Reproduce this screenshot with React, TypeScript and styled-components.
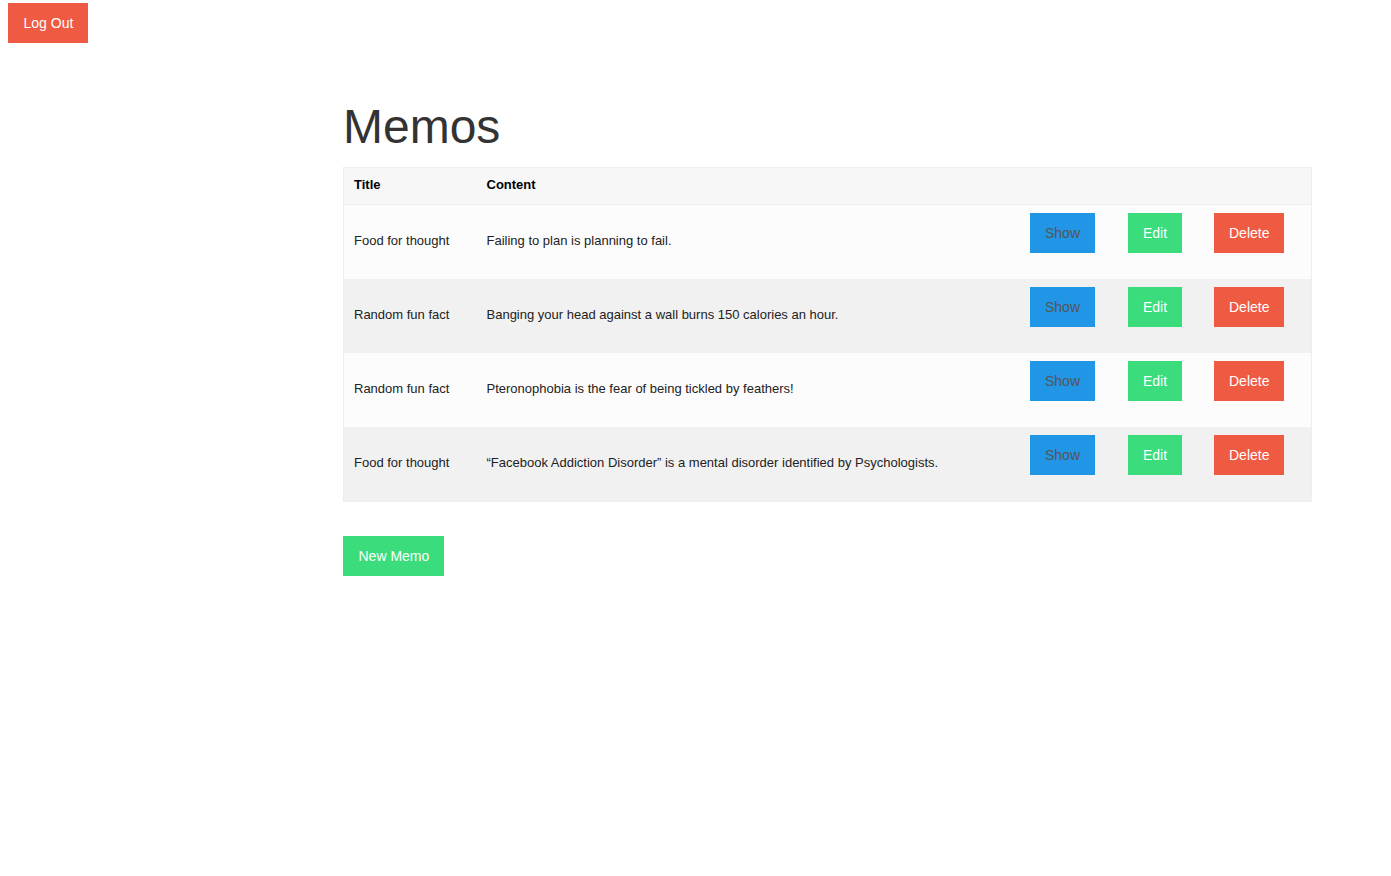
import React from 'react'
import styled, { createGlobalStyle } from 'styled-components'

const GlobalStyle = createGlobalStyle`
    body {
        margin: 0;
        background: #fff;
        font-family: "Liberation Sans", Arial, sans-serif;
        color: #333;
    }
`

const memos = [
    { title: 'Food for thought', content: 'Failing to plan is planning to fail.' },
    { title: 'Random fun fact', content: 'Banging your head against a wall burns 150 calories an hour.' },
    { title: 'Random fun fact', content: 'Pteronophobia is the fear of being tickled by feathers!' },
    { title: 'Food for thought', content: '\u201cFacebook Addiction Disorder\u201d is a mental disorder identified by Psychologists.' },
]

const colors = {
    red: '#ef5a42',
    green: '#3adc7b',
    blue: '#2196e6',
}

const App = () => {
    return (
        <>
            <GlobalStyle />
            <TopBar>
                <Button color="red">Log Out</Button>
            </TopBar>
            <Page>
                <Container>
                    <Heading>Memos</Heading>
                    <MemoTable>
                        <colgroup>
                            <col style={{ width: 133 }} />
                            <col style={{ width: 543 }} />
                            <col style={{ width: 98 }} />
                            <col style={{ width: 86 }} />
                            <col />
                        </colgroup>
                        <thead>
                            <tr>
                                <HeadCell>Title</HeadCell>
                                <HeadCell>Content</HeadCell>
                                <HeadCell />
                                <HeadCell />
                                <HeadCell />
                            </tr>
                        </thead>
                        <tbody>
                            {memos.map((memo, i) => (
                                <Row key={i} striped={i % 2 === 1}>
                                    <Cell>{memo.title}</Cell>
                                    <Cell>{memo.content}</Cell>
                                    <ActionCell><Button color="blue" muted>Show</Button></ActionCell>
                                    <ActionCell><Button color="green">Edit</Button></ActionCell>
                                    <ActionCell><Button color="red">Delete</Button></ActionCell>
                                </Row>
                            ))}
                        </tbody>
                    </MemoTable>
                    <Footer>
                        <Button color="green">New Memo</Button>
                    </Footer>
                </Container>
            </Page>
        </>
    )
}

const TopBar = styled.div`
    padding: 3px 8px 0;
    display: flex;
`

const Button = styled.button<{ color: keyof typeof colors; muted?: boolean }>`
    display: inline-block;
    height: 40px;
    padding: 0 15px 0 15.5px;
    border: none;
    border-radius: 0;
    background: ${p => colors[p.color]};
    color: ${p => (p.muted ? '#555' : '#fff')};
    font-family: "Liberation Sans", Arial, sans-serif;
    font-size: 14px;
    line-height: 40px;
    cursor: pointer;
`

const Page = styled.div`
    display: flex;
    padding-left: 343px;
`

const Container = styled.div`
    width: 969px;
`

const Heading = styled.h1`
    margin: 56px 0 12px;
    font-size: 48px;
    font-weight: 400;
    line-height: 56px;
    color: #333;
`

const MemoTable = styled.table`
    width: 969px;
    table-layout: fixed;
    border-collapse: collapse;
    border: 1px solid #eee;
    font-size: 13px;
`

const HeadCell = styled.th`
    height: 33px;
    padding: 0 10px 3px;
    background: #f7f7f7;
    border-bottom: 1px solid #eee;
    text-align: left;
    font-weight: 700;
    color: #000;
`

const Row = styled.tr<{ striped: boolean }>`
    height: 74px;
    background: ${p => (p.striped ? '#f1f1f1' : '#fcfcfc')};
    &:last-child {
        height: 75px;
    }
`

const Cell = styled.td`
    padding: 0 10px 2px;
    vertical-align: middle;
    color: #222;
`

const ActionCell = styled.td`
    padding: 8px 10px 0;
    vertical-align: top;
`

const Footer = styled.div`
    margin-top: 34px;
`

export default App
